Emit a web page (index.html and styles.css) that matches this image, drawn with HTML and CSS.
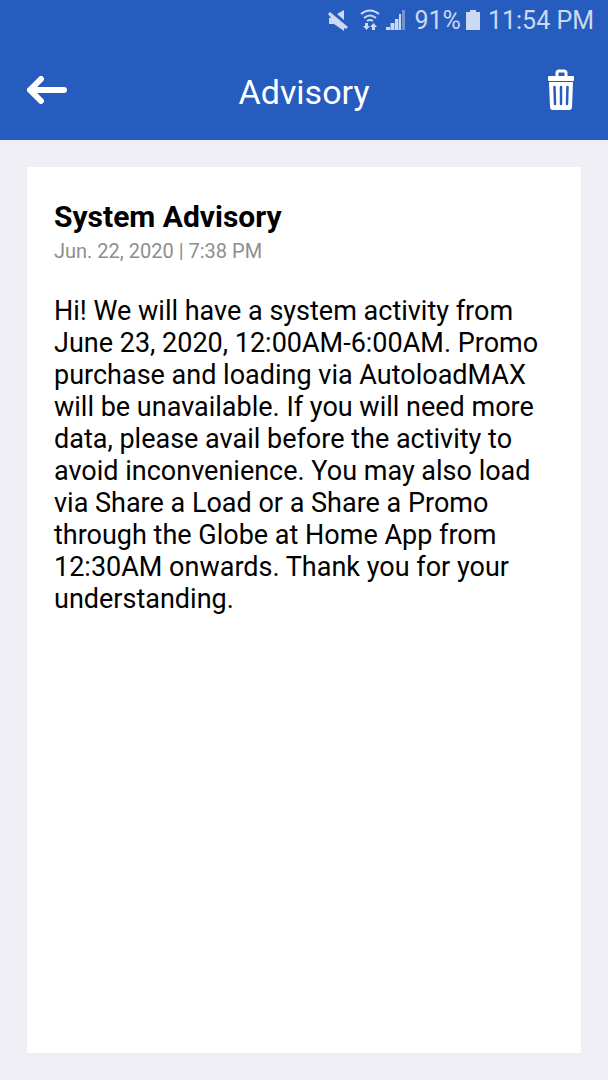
FILE: index.html
```html
<!DOCTYPE html>
<html lang="en">
<head>
  <meta charset="UTF-8">
  <meta name="viewport" content="width=device-width, initial-scale=1">
  <title>Advisory</title>
  <link rel="stylesheet" href="styles.css">
</head>
<body>

<header class="header">
  <div class="status-bar">
    <svg class="mute-icon" width="20" height="22" viewBox="0 0 20 22">
      <path d="M2 3L20 18L18 20L16 19V22L6 15H1V9H3L0 5z" fill="currentColor"/>
      <path d="M9 5L16 1V11z" fill="currentColor"/>
    </svg>
    <svg class="wifi-icon" width="20" height="22" viewBox="0 0 20 22">
      <path d="M1 5q9-7 18 0M4 9q6-5 12 0M7 12q3-2 6 0" fill="none" stroke="currentColor" stroke-width="2"/>
      <path d="M5 14h3v3h2l-3.500 4-3.500-4h2zM12 21h3v-3h2l-3.500-4-3.500 4h2z" fill="currentColor"/>
    </svg>
    <svg class="signal-icon" width="20" height="20" viewBox="0 0 20 20">
      <path d="M0 17h4v3H0zM4.500 13h4v7h-4zM9 9h3.500v11H9zM13 4h2v16h-2z" fill="currentColor"/>
      <path d="M16 0h3v20h-3z" fill="currentColor" opacity=".45"/>
    </svg>
    <span>91%</span>
    <svg class="battery-icon" width="14" height="20" viewBox="0 0 14 20">
      <path d="M4 0h6v2h4v18H0V2h4z" fill="currentColor"/>
    </svg>
    <span class="time">11:54 PM</span>
  </div>

  <div class="nav-bar">
    <button type="button" class="icon-btn" aria-label="Back">
      <svg width="42" height="28" viewBox="0 0 42 28">
        <path d="M38 14H4M15 3L4 14l11 11" fill="none" stroke="#fff" stroke-width="6" stroke-linecap="round" stroke-linejoin="round"/>
      </svg>
    </button>
    <h1>Advisory</h1>
    <button type="button" class="icon-btn delete-btn" aria-label="Delete">
      <svg width="26" height="42" viewBox="0 0 26 42">
        <path d="M9 7V4q0-2 2-2h5q2 0 2 2v3" fill="none" stroke="#fff" stroke-width="3"/>
        <rect x="0" y="7" width="26" height="5" rx="1" fill="#fff"/>
        <path d="M1 13h24l-1 25q0 3-3 3H5q-3 0-3-3z" fill="#fff"/>
        <path d="M6.500 18l.5 17M13 18v17M19.500 18l-.5 17" fill="none" stroke="#265cbd" stroke-width="2.500" stroke-linecap="round"/>
      </svg>
    </button>
  </div>
</header>

<main class="content">
  <article class="card">
    <h2>System Advisory</h2>
    <p class="date">Jun. 22, 2020 | 7:38 PM</p>
    <p class="message">Hi! We will have a system activity from June 23, 2020, 12:00AM-6:00AM. Promo purchase and loading via AutoloadMAX will be unavailable. If you will need more data, please avail before the activity to avoid inconvenience. You may also load via Share a Load or a Share a Promo through the Globe at Home App from 12:30AM onwards. Thank you for your understanding.</p>
  </article>
</main>

</body>
</html>
```

FILE: styles.css
```css
* {
  box-sizing: border-box;
}
body {
  margin: 0;
  min-height: 100vh;
  display: flex;
  flex-direction: column;
  background-color: #f0eff5;
  font-family: Roboto, sans-serif;
  color: #000;
}
h1, h2, p {
  margin: 0;
}
.header {
  background-color: #265cbd;
}
.status-bar {
  display: flex;
  justify-content: flex-end;
  align-items: center;
  height: 40px;
  padding-right: 14px;
  font-size: 25px;
  color: #cbd9f2;
}
.mute-icon {
  margin-right: 12px;
}
.wifi-icon {
  margin-right: 6px;
}
.signal-icon {
  margin-right: 9px;
}
.battery-icon {
  margin: 0 8px 0 5px;
}
.nav-bar {
  display: grid;
  grid-template-columns: 1fr auto 1fr;
  align-items: center;
  height: 100px;
  padding: 0 26px;
  color: #fff;
}
.nav-bar h1 {
  font-size: 34px;
  font-weight: 400;
  line-height: 40px;
  padding-top: 4px;
}
.icon-btn {
  justify-self: start;
  padding: 0;
  border: none;
  background: none;
  cursor: pointer;
}
.icon-btn svg {
  display: block;
}
.delete-btn {
  justify-self: end;
  padding-right: 8px;
}
.content {
  flex: 1;
  display: flex;
  padding: 27px;
}
.card {
  flex: 1;
  padding: 32px 27px;
  background-color: #fff;
}
.card h2 {
  font-size: 30px;
  font-weight: 700;
  line-height: 36px;
}
.date {
  font-size: 20px;
  line-height: 32px;
  color: #8e8e8e;
}
.message {
  margin-top: 28px;
  font-size: 27px;
  line-height: 32px;
}
```
